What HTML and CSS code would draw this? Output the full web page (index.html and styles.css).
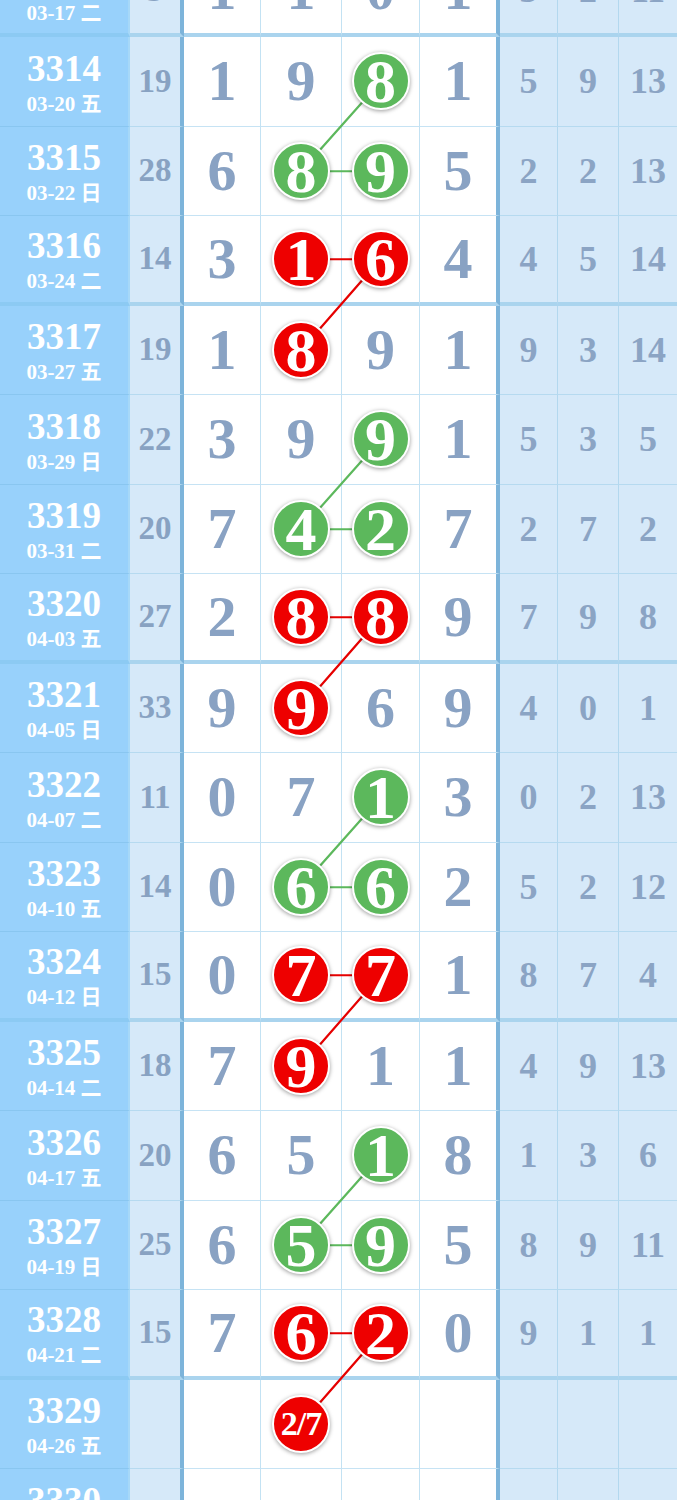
FILE: index.html
```html
<!DOCTYPE html>
<html lang="zh-CN">
<head>
    <meta charset="UTF-8">
    <meta name="viewport" content="width=device-width, initial-scale=1.0">
    <title>走势图</title>
    <link rel="stylesheet" href="styles.css">
</head>
<body>
    <div class="chart">
        <!-- connecting lines between the balls, drawn under them -->
        <svg class="links" width="677" height="1611" viewBox="0 0 677 1611">
            <polyline class="g" points="380.5,133.75 301,223.25 380.5,223.25"/>
            <polyline class="r" points="301,311.25 380.5,311.25 301,402.25"/>
            <polyline class="g" points="380.5,491.75 301,581.25 380.5,581.25"/>
            <polyline class="r" points="301,669.25 380.5,669.25 301,760.25"/>
            <polyline class="g" points="380.5,849.75 301,939.25 380.5,939.25"/>
            <polyline class="r" points="301,1027.25 380.5,1027.25 301,1118.25"/>
            <polyline class="g" points="380.5,1207.75 301,1297.25 380.5,1297.25"/>
            <polyline class="r" points="301,1385.25 380.5,1385.25 301,1476.25"/>
        </svg>

        <div class="row end">
            <div class="issue"><b>3313</b><span>03-17 二</span></div>
            <div class="sum">3</div>
            <div class="num">1</div><div class="num">1</div><div class="num">0</div><div class="num last">1</div>
            <div class="stat">3</div><div class="stat">2</div><div class="stat">11</div>
        </div>
        <div class="row">
            <div class="issue"><b>3314</b><span>03-20 五</span></div>
            <div class="sum">19</div>
            <div class="num">1</div><div class="num">9</div><div class="num"><i class="ball green">8</i></div><div class="num last">1</div>
            <div class="stat">5</div><div class="stat">9</div><div class="stat">13</div>
        </div>
        <div class="row">
            <div class="issue"><b>3315</b><span>03-22 日</span></div>
            <div class="sum">28</div>
            <div class="num">6</div><div class="num"><i class="ball green">8</i></div><div class="num"><i class="ball green">9</i></div><div class="num last">5</div>
            <div class="stat">2</div><div class="stat">2</div><div class="stat">13</div>
        </div>
        <div class="row end">
            <div class="issue"><b>3316</b><span>03-24 二</span></div>
            <div class="sum">14</div>
            <div class="num">3</div><div class="num"><i class="ball red">1</i></div><div class="num"><i class="ball red">6</i></div><div class="num last">4</div>
            <div class="stat">4</div><div class="stat">5</div><div class="stat">14</div>
        </div>
        <div class="row">
            <div class="issue"><b>3317</b><span>03-27 五</span></div>
            <div class="sum">19</div>
            <div class="num">1</div><div class="num"><i class="ball red">8</i></div><div class="num">9</div><div class="num last">1</div>
            <div class="stat">9</div><div class="stat">3</div><div class="stat">14</div>
        </div>
        <div class="row">
            <div class="issue"><b>3318</b><span>03-29 日</span></div>
            <div class="sum">22</div>
            <div class="num">3</div><div class="num">9</div><div class="num"><i class="ball green">9</i></div><div class="num last">1</div>
            <div class="stat">5</div><div class="stat">3</div><div class="stat">5</div>
        </div>
        <div class="row">
            <div class="issue"><b>3319</b><span>03-31 二</span></div>
            <div class="sum">20</div>
            <div class="num">7</div><div class="num"><i class="ball green">4</i></div><div class="num"><i class="ball green">2</i></div><div class="num last">7</div>
            <div class="stat">2</div><div class="stat">7</div><div class="stat">2</div>
        </div>
        <div class="row end">
            <div class="issue"><b>3320</b><span>04-03 五</span></div>
            <div class="sum">27</div>
            <div class="num">2</div><div class="num"><i class="ball red">8</i></div><div class="num"><i class="ball red">8</i></div><div class="num last">9</div>
            <div class="stat">7</div><div class="stat">9</div><div class="stat">8</div>
        </div>
        <div class="row">
            <div class="issue"><b>3321</b><span>04-05 日</span></div>
            <div class="sum">33</div>
            <div class="num">9</div><div class="num"><i class="ball red">9</i></div><div class="num">6</div><div class="num last">9</div>
            <div class="stat">4</div><div class="stat">0</div><div class="stat">1</div>
        </div>
        <div class="row">
            <div class="issue"><b>3322</b><span>04-07 二</span></div>
            <div class="sum">11</div>
            <div class="num">0</div><div class="num">7</div><div class="num"><i class="ball green">1</i></div><div class="num last">3</div>
            <div class="stat">0</div><div class="stat">2</div><div class="stat">13</div>
        </div>
        <div class="row">
            <div class="issue"><b>3323</b><span>04-10 五</span></div>
            <div class="sum">14</div>
            <div class="num">0</div><div class="num"><i class="ball green">6</i></div><div class="num"><i class="ball green">6</i></div><div class="num last">2</div>
            <div class="stat">5</div><div class="stat">2</div><div class="stat">12</div>
        </div>
        <div class="row end">
            <div class="issue"><b>3324</b><span>04-12 日</span></div>
            <div class="sum">15</div>
            <div class="num">0</div><div class="num"><i class="ball red">7</i></div><div class="num"><i class="ball red">7</i></div><div class="num last">1</div>
            <div class="stat">8</div><div class="stat">7</div><div class="stat">4</div>
        </div>
        <div class="row">
            <div class="issue"><b>3325</b><span>04-14 二</span></div>
            <div class="sum">18</div>
            <div class="num">7</div><div class="num"><i class="ball red">9</i></div><div class="num">1</div><div class="num last">1</div>
            <div class="stat">4</div><div class="stat">9</div><div class="stat">13</div>
        </div>
        <div class="row">
            <div class="issue"><b>3326</b><span>04-17 五</span></div>
            <div class="sum">20</div>
            <div class="num">6</div><div class="num">5</div><div class="num"><i class="ball green">1</i></div><div class="num last">8</div>
            <div class="stat">1</div><div class="stat">3</div><div class="stat">6</div>
        </div>
        <div class="row">
            <div class="issue"><b>3327</b><span>04-19 日</span></div>
            <div class="sum">25</div>
            <div class="num">6</div><div class="num"><i class="ball green">5</i></div><div class="num"><i class="ball green">9</i></div><div class="num last">5</div>
            <div class="stat">8</div><div class="stat">9</div><div class="stat">11</div>
        </div>
        <div class="row end">
            <div class="issue"><b>3328</b><span>04-21 二</span></div>
            <div class="sum">15</div>
            <div class="num">7</div><div class="num"><i class="ball red">6</i></div><div class="num"><i class="ball red">2</i></div><div class="num last">0</div>
            <div class="stat">9</div><div class="stat">1</div><div class="stat">1</div>
        </div>
        <div class="row">
            <div class="issue"><b>3329</b><span>04-26 五</span></div>
            <div class="sum"></div>
            <div class="num"></div><div class="num"><i class="ball red small">2/7</i></div><div class="num"></div><div class="num last"></div>
            <div class="stat"></div><div class="stat"></div><div class="stat"></div>
        </div>
        <div class="row">
            <div class="issue"><b>3330</b><span>04-28 日</span></div>
            <div class="sum"></div>
            <div class="num"></div><div class="num"></div><div class="num"></div><div class="num last"></div>
            <div class="stat"></div><div class="stat"></div><div class="stat"></div>
        </div>
    </div>
</body>
</html>
```

FILE: styles.css
```css
body {
    margin: 0;
    background-color: #fff;
    font-family: "Liberation Serif", "Noto Sans CJK SC", serif;
    overflow: hidden;
}
.chart {
    position: relative;
    width: 677px;
    margin-top: -52.5px;
}
.links {
    position: absolute;
    top: 0;
    left: 0;
    z-index: 1;
}
.links polyline {
    fill: none;
    stroke-width: 2.2;
}
.links .g {
    stroke: #5cb85c;
}
.links .r {
    stroke: #e60000;
}
.row {
    display: grid;
    grid-template-columns: 130px 54px 77px 81px 78px 80px 58px 61px 58px;
    height: 89.5px;
}
.row > div {
    box-sizing: border-box;
    display: flex;
    align-items: center;
    justify-content: center;
    border-bottom: 1px solid #c6e3f4;
    font-weight: bold;
    line-height: 1;
}
.issue {
    flex-direction: column;
    background-color: #98d1fb;
    border-right: 2px solid #a6d8f8;
    color: #fff;
    padding-top: 2px;
}
.row > .issue {
    border-bottom-color: #89c6f0;
}
.issue b {
    font-size: 37px;
    line-height: 40px;
}
.issue span {
    margin-top: 3px;
    font-size: 21px;
    line-height: 24px;
}
.sum {
    background-color: #d6e9f9;
    border-right: 4px solid #7db4da;
    color: #88a2c2;
    font-size: 33px;
}
.row > .sum,
.row > .stat {
    border-bottom-color: #b6daf0;
}
.num {
    background-color: #fff;
    border-right: 1px solid #c3e2f3;
    color: #89a2c3;
    font-size: 58px;
}
.num.last {
    border-right: 4px solid #7db4da;
}
.stat {
    background-color: #d6e9f9;
    border-right: 1px solid #b3d8ef;
    color: #8ba4c4;
    font-size: 36px;
}
.stat:last-child {
    border-right: none;
}
.row.end > div {
    border-bottom: 4px solid #aad4ee;
}
.row.end > .issue {
    border-bottom-color: #8ccaf3;
}
.ball {
    position: relative;
    z-index: 2;
    box-sizing: border-box;
    display: flex;
    align-items: center;
    justify-content: center;
    width: 58px;
    height: 58px;
    border: 2.5px solid #fff;
    border-radius: 50%;
    box-shadow: 0 1px 4px rgba(0,0,0,0.4);
    color: #fff;
    font-style: normal;
    font-size: 62px;
    line-height: 1;
}
.green {
    background-color: #5cb85c;
}
.red {
    background-color: #ee0000;
}
.ball.small {
    font-size: 34px;
    letter-spacing: -1px;
}
```
